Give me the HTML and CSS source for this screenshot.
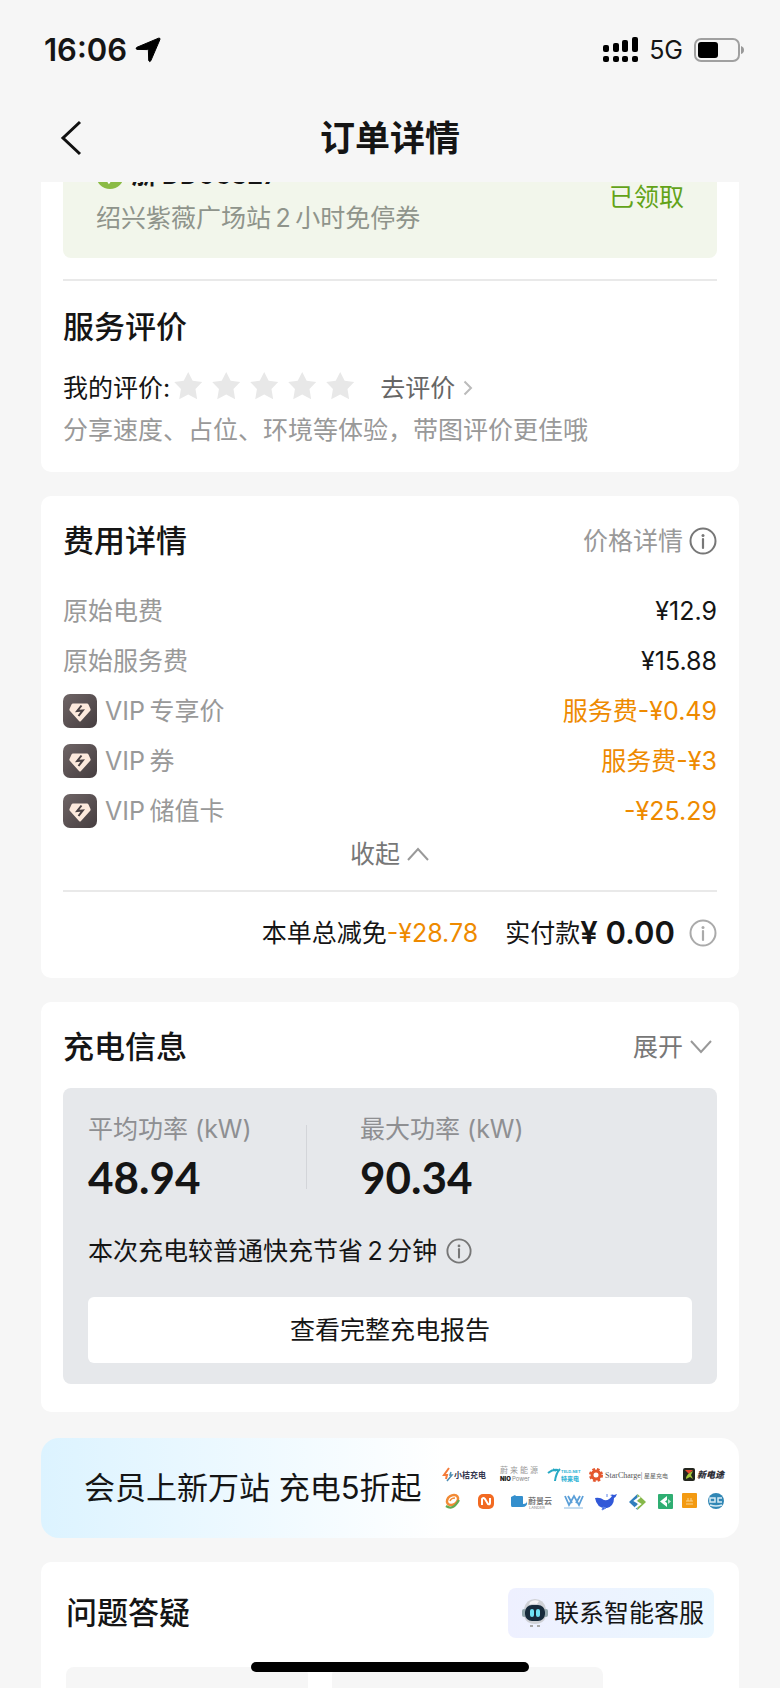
FILE: index.html
```
<!DOCTYPE html>
<html lang="zh-CN">

<head>
    <meta charset="UTF-8">
    <meta name="viewport" content="width=device-width, initial-scale=1.0">
    <title>订单详情</title>
    <link rel="stylesheet" href="styles.css">
</head>

<body>
    <svg width="0" height="0" class="defs" aria-hidden="true">
        <linearGradient id="vipBg" x1="0" y1="0" x2="1" y2="1">
            <stop offset="0" stop-color="#6f6566" />
            <stop offset="1" stop-color="#453d3f" />
        </linearGradient>
        <symbol id="info" viewBox="0 0 28 28">
            <circle cx="14" cy="14" r="12.5" fill="none" stroke="currentColor" stroke-width="2" />
            <circle cx="14" cy="8.5" r="1.5" fill="currentColor" />
            <path d="M14 12v9" stroke="currentColor" stroke-width="2.2" stroke-linecap="round" />
        </symbol>
        <symbol id="vip" viewBox="0 0 34 34">
            <rect width="34" height="34" rx="7" fill="url(#vipBg)" />
            <path d="M10 9.500h14q1 0 1.500 1l2 4.500q.4 1-.3 1.800L18 27q-1 1-2 0l-9.200-10.200q-.7-.8-.3-1.800l2-4.500q.5-1 1.500-1z" fill="#fdeadd" />
            <path d="M18.500 11.500l-4.300 5.500 5.600-.6-4.300 5.600" fill="none" stroke="#4a4143" stroke-width="2" />
        </symbol>
    </svg>

    <div class="app">
        <header class="header">
            <div class="status">
                <span class="time">16:06</span>
                <svg class="location" width="26" height="26" viewBox="0 0 26 26">
                    <path d="M23.500 1.200Q25.500.6 24.900 2.600L15.800 23.800Q14.600 25.600 13.700 23.500L13.400 13.400Q13.300 12.700 12.600 12.600L2 12.400Q0 11.500 1.900 10.300z" fill="#000" stroke="#000" />
                </svg>
                <svg class="signal" width="36" height="26" viewBox="0 0 36 26">
                    <rect x="0" y="8" width="6" height="7" rx="2" />
                    <rect x="10" y="6" width="6" height="9" rx="2" />
                    <rect x="19" y="3" width="6" height="12" rx="2" />
                    <rect x="29" y="0" width="6" height="15" rx="2" />
                    <rect x="0" y="19" width="6" height="6" rx="2" />
                    <rect x="10" y="19" width="6" height="6" rx="2" />
                    <rect x="19" y="19" width="6" height="6" rx="2" />
                    <rect x="29" y="19" width="6" height="6" rx="2" />
                </svg>
                <span class="network">5G</span>
                <svg width="50" height="24" viewBox="0 0 50 24">
                    <rect x="1" y="1" width="44" height="22" rx="6" fill="none" stroke="#a0a0a0" stroke-width="2" />
                    <rect x="4" y="4" width="20" height="16" rx="3" fill="#000" />
                    <path d="M47 8q3 1 3 4t-3 4z" fill="#999" />
                </svg>
            </div>
            <div class="navbar">
                <button type="button" class="back" aria-label="返回">
                    <svg width="22" height="36" viewBox="0 0 22 36">
                        <path d="M20 2L3 18l17 16" fill="none" stroke="#111" stroke-width="3" />
                    </svg>
                </button>
                <h1>订单详情</h1>
            </div>
        </header>

        <main class="content">
            <section class="card card-service">
                <div class="coupon">
                    <div class="coupon-info">
                        <div class="plate">
                            <svg width="28" height="28" viewBox="0 0 26 26">
                                <circle cx="13" cy="13" r="13" fill="#8bbb45" />
                                <path d="M7 12l5 7 8-11" fill="none" stroke="#fff" stroke-width="3" />
                            </svg>
                            <span>浙 DD06327</span>
                        </div>
                        <p>绍兴紫薇广场站&thinsp;2&thinsp;小时免停券</p>
                    </div>
                    <span class="coupon-state">已领取</span>
                </div>
                <hr>
                <h2>服务评价</h2>
                <div class="rating">
                    <span id="ratingLabel">我的评价:</span>
                    <div class="stars" role="radiogroup" aria-labelledby="ratingLabel">
                        <input type="radio" name="star" value="1" aria-label="1星">
                        <input type="radio" name="star" value="2" aria-label="2星">
                        <input type="radio" name="star" value="3" aria-label="3星">
                        <input type="radio" name="star" value="4" aria-label="4星">
                        <input type="radio" name="star" value="5" aria-label="5星">
                    </div>
                    <a href="#" class="rate-link">去评价
                        <svg width="10" height="16" viewBox="0 0 10 16">
                            <path d="M1.500 1.500L8 8l-6.500 6.500" fill="none" stroke="#bbb" stroke-width="2" />
                        </svg>
                    </a>
                </div>
                <p class="hint">分享速度、占位、环境等体验，带图评价更佳哦</p>
            </section>

            <section class="card card-fee">
                <div class="card-head">
                    <h2>费用详情</h2>
                    <button type="button" class="text-btn light">价格详情
                        <svg class="dark-icon" width="28" height="28"><use href="#info" /></svg>
                    </button>
                </div>
                <dl class="fees">
                    <div class="fee">
                        <dt>原始电费</dt>
                        <dd>¥12.9</dd>
                    </div>
                    <div class="fee">
                        <dt>原始服务费</dt>
                        <dd>¥15.88</dd>
                    </div>
                    <div class="fee">
                        <dt><svg width="34" height="34"><use href="#vip" /></svg>VIP&thinsp;专享价</dt>
                        <dd class="discount">服务费-¥0.49</dd>
                    </div>
                    <div class="fee">
                        <dt><svg width="34" height="34"><use href="#vip" /></svg>VIP&thinsp;券</dt>
                        <dd class="discount">服务费-¥3</dd>
                    </div>
                    <div class="fee">
                        <dt><svg width="34" height="34"><use href="#vip" /></svg>VIP&thinsp;储值卡</dt>
                        <dd class="discount">-¥25.29</dd>
                    </div>
                </dl>
                <button type="button" class="text-btn collapse">收起
                    <svg width="24" height="16" viewBox="0 0 24 16">
                        <path d="M2 14L12 3l10 11" fill="none" stroke="#999" stroke-width="2" />
                    </svg>
                </button>
                <hr>
                <div class="total">
                    <span>本单总减免<span class="discount">-¥28.78</span></span>
                    <span class="paid">实付款<strong>¥ 0.00</strong></span>
                    <button type="button" class="text-btn muted" aria-label="实付款说明">
                        <svg width="28" height="28"><use href="#info" /></svg>
                    </button>
                </div>
            </section>

            <section class="card card-charge">
                <div class="card-head">
                    <h2>充电信息</h2>
                    <button type="button" class="text-btn">展开
                        <svg width="24" height="16" viewBox="0 0 24 16">
                            <path d="M2 2l10 11L22 2" fill="none" stroke="#999" stroke-width="2" />
                        </svg>
                    </button>
                </div>
                <div class="report">
                    <div class="powers">
                        <div class="power">
                            <span>平均功率 (kW)</span>
                            <strong>48.94</strong>
                        </div>
                        <div class="power">
                            <span>最大功率 (kW)</span>
                            <strong>90.34</strong>
                        </div>
                    </div>
                    <p class="saving">本次充电较普通快充节省&thinsp;2&thinsp;分钟
                        <svg class="dark-icon" width="26" height="26"><use href="#info" /></svg>
                    </p>
                    <button type="button" class="report-btn">查看完整充电报告</button>
                </div>
            </section>

            <a href="#" class="banner">
                <span>会员上新万站 充电5折起</span>
                <svg class="partners" width="290" height="56" viewBox="0 0 290 56">
                    <!-- 第一行 -->
                    <path d="M9 8l-5 7h3l-1 4" fill="none" stroke="#f47b3a" stroke-width="2" />
                    <path d="M11 12l-1 3h2l-5 6" fill="none" stroke="#4b8db5" stroke-width="1.500" />
                    <text x="14" y="18" font-size="8" font-weight="700" fill="#35374f">小桔充电</text>
                    <text x="60 70 80 90" y="13" font-size="8" fill="#999">蔚来能源</text>
                    <text x="60" y="21" font-size="6" font-weight="900" fill="#222">NIO</text>
                    <text x="72" y="21" font-size="6" fill="#888">Power</text>
                    <path d="M108 13q5-4 10-3M115 21q1-8 5-12M113 9l3 2" fill="none" stroke="#27a9c4" stroke-width="2" />
                    <text x="121" y="13" font-size="4" font-weight="700" fill="#35b5d6">TELD.NET</text>
                    <text x="121" y="21" font-size="6" font-weight="900" fill="#35b5d6">特来电</text>
                    <circle cx="156" cy="15" r="4" fill="none" stroke="#e4572e" stroke-width="3" />
                    <circle cx="156" cy="15" r="5.800" fill="none" stroke="#e4572e" stroke-width="2.500" stroke-dasharray="2.600 2" />
                    <text class="serif" x="165" y="18" font-size="8" fill="#555">StarCharge|</text>
                    <text x="204" y="18" font-size="6" fill="#666">星星充电</text>
                    <rect x="243" y="8" width="12" height="13" rx="2" fill="#24261f" />
                    <path d="M245 10l4 4 4-4z" fill="#e4492d" />
                    <path d="M246 19q0-5 7-8l-2 4 2 4-3-2z" fill="#a6c83a" />
                    <text x="257" y="18" font-size="9" font-weight="900" font-style="italic" fill="#2d2d35">新电途</text>
                    <!-- 第二行 -->
                    <ellipse cx="12.500" cy="40" rx="6" ry="4.500" transform="rotate(-35 12.500 40)" fill="none" stroke="#f28a35" stroke-width="2.500" />
                    <path d="M10 41q1-3 5-3" fill="none" stroke="#f28a35" stroke-width="1.500" />
                    <path d="M6 46q7 5 13-6" fill="none" stroke="#64aa52" stroke-width="2.200" />
                    <rect x="38" y="34" width="16" height="15" rx="5" fill="#f26a22" />
                    <path d="M42 45v-6q1-2 3 0l3 5q2 1 2-1v-5" fill="none" stroke="#fff" stroke-width="2" />
                    <path d="M71 37l4-2 1 1h6q1 0 1 1v7q4 0 4-3 1 6-5 6H72q-1 0-1-2z" fill="#348fcd" />
                    <text x="88" y="44" font-size="8" font-weight="700" fill="#777">蔚景云</text>
                    <text x="89" y="49" font-size="4" fill="#888">LANDER</text>
                    <path d="M125 36l4 9 5-9 5 9 4-9M128 36l4 7M140 36l-4 7" fill="none" stroke="#5b9fd8" stroke-width="1.800" />
                    <path d="M124 48h19" stroke="#8dbbe0" stroke-width="1" />
                    <path d="M155 38q5-1 9 2 5 1 8-4l-2-1q3-1 4 0l3-1q-1 3-3 4 0 8-7 10-10 1-12-10z" fill="#3158d8" />
                    <path d="M163 47l-1 3 4-2zM167 34v3" fill="#3158d8" stroke="#5f86ea" />
                    <path d="M197.500 34l-8.500 8 8.500 8z" fill="#2f7ebd" />
                    <path d="M197.500 34l8.500 8-8.500 8z" fill="#86b84a" />
                    <path d="M200 37l-5 4 5 3-5 4" fill="none" stroke="#fff" stroke-width="2" />
                    <rect x="218" y="34" width="15" height="15" rx="1" fill="#2fae72" />
                    <path d="M227 36l-7 5.500 7 5.500v-4l-2-1.500 2-1.500z" fill="#fff" />
                    <path d="M228 39l3 2.500-3 2.500z" fill="#bfe8d4" />
                    <rect x="242" y="33" width="15" height="15" rx="1" fill="#f39a12" />
                    <path d="M246 41h7M246 44h7M248 38v3M251 38v3" stroke="#fbd48f" stroke-width="1" />
                    <circle cx="276" cy="41" r="8" fill="#3187b5" />
                    <path d="M270 38h5v4h-5zM282 38h-4v4h4M270 45q6 2 12 0" fill="none" stroke="#d7ecf5" stroke-width="1.500" />
                </svg>
            </a>

            <section class="card card-faq">
                <div class="card-head">
                    <h2>问题答疑</h2>
                    <button type="button" class="service-btn">
                        <svg width="26" height="30" viewBox="0 0 26 30">
                            <path d="M2 18V11q2-10 11-10t11 10v7q-2 8-11 8T2 18z" fill="#cfd1d6" />
                            <path d="M8 4q4-3 9-1l-2 3q-4-1-8 1z" fill="#f5f5f7" />
                            <rect x="0" y="11" width="4" height="8" rx="2" fill="#92a7ad" />
                            <rect x="22" y="11" width="4" height="8" rx="2" fill="#92a7ad" />
                            <rect x="3" y="7" width="20" height="16" rx="7" fill="#172b3c" />
                            <rect x="8" y="11" width="4" height="8" rx="2" fill="#6fe2f5" />
                            <rect x="14" y="11" width="4" height="8" rx="2" fill="#6fe2f5" />
                            <path d="M8 28h3M15 28h3" stroke="#aaa" stroke-width="2" />
                        </svg>
                        联系智能客服
                    </button>
                </div>
                <div class="questions">
                    <div class="question short"></div>
                    <div class="question"></div>
                </div>
            </section>
        </main>

        <div class="home-bar"></div>
    </div>
</body>

</html>
```
FILE: styles.css
```
body {
    margin: 0;
    background-color: #f6f6f6;
    color: #151515;
    font-family: Inter, "Noto Sans CJK SC", sans-serif;
    font-size: 25px;
    line-height: 36px;
}

h1,
h2,
p,
dl,
dd {
    margin: 0;
}

h1 {
    font-size: 35px;
    line-height: 48px;
    font-weight: 700;
}

h2 {
    font-size: 31px;
    line-height: 44px;
    font-weight: 500;
}

svg {
    display: block;
    flex-shrink: 0;
}

button {
    border: none;
    padding: 0;
    background: none;
    color: inherit;
    font: inherit;
    cursor: pointer;
}

a {
    color: inherit;
    text-decoration: none;
}

hr {
    height: 2px;
    margin: 0;
    border: none;
    background-color: #e9e9e9;
}

.defs {
    position: absolute;
}

.app {
    height: 100vh;
    overflow: hidden;
}

/* Cabecera fija, el contenido pasa por debajo */
.header {
    position: sticky;
    top: 0;
    z-index: 1;
    height: 182px;
    background-color: #f6f6f6;
}

.status {
    display: flex;
    align-items: center;
    padding: 32px 36px 0 44px;
}

.time {
    font-size: 31px;
    font-weight: 600;
}

.location {
    margin-left: 8px;
}

.signal {
    margin-left: auto;
}

.network {
    margin: 0 11px 0 10px;
}

.navbar {
    display: grid;
    grid-template-columns: 1fr auto 1fr;
    align-items: center;
    padding: 46px 60px 0;
}

.content {
    display: flex;
    flex-direction: column;
    gap: 24px;
    margin-top: -24px;
    padding: 0 41px;
}

.card {
    padding: 0 22px;
    border-radius: 10px;
    background-color: #fff;
}

.card-head {
    display: flex;
    justify-content: space-between;
    align-items: center;
}

/* Cupon y valoracion */
.card-service {
    padding-bottom: 24px;
}

.coupon {
    display: flex;
    justify-content: space-between;
    align-items: center;
    margin-bottom: 21px;
    padding: 0 33px 22px;
    border-radius: 8px;
    background-color: #f2f6eb;
    color: #8f948b;
}

.plate {
    display: flex;
    align-items: center;
    gap: 7px;
    height: 34px;
    margin-bottom: 8px;
    color: #151515;
    font-weight: 700;
}

.coupon-state {
    color: #62a318;
}

.card-service h2 {
    margin-top: 24px;
}

.rating {
    display: flex;
    align-items: center;
    margin-top: 21px;
}

.stars {
    display: flex;
    gap: 10px;
    margin-left: 4px;
}

.stars input {
    appearance: none;
    width: 28px;
    height: 28px;
    margin: 0 0 4px;
    background-color: #e8e8e8;
    clip-path: polygon(50% 0, 66% 31%, 100% 36%, 76% 61%, 82% 97%, 50% 80%, 18% 97%, 24% 61%, 0 36%, 34% 31%);
}

.stars input:checked {
    background-color: #f7a400;
}

.rate-link {
    display: flex;
    align-items: center;
    gap: 8px;
    margin-left: 26px;
    color: #666;
}

.hint {
    margin-top: 6px;
    color: #999;
}

/* Detalle de costos */
.card-fee {
    padding-top: 23px;
    padding-bottom: 27px;
}

.text-btn {
    display: flex;
    align-items: center;
    gap: 6px;
    color: #777;
}

.text-btn.light {
    color: #999;
}

.text-btn.muted {
    color: #aaa;
}

.dark-icon {
    color: #777;
}

.fees {
    margin-top: 23px;
}

.fee {
    display: flex;
    justify-content: space-between;
    align-items: center;
    height: 50px;
}

.fee dt {
    display: flex;
    align-items: center;
    gap: 8px;
    color: #999;
}

.discount {
    color: #ee8a00;
}

.collapse {
    margin: 0 auto 18px;
}

.total {
    display: flex;
    justify-content: flex-end;
    align-items: center;
    margin-top: 23px;
}

.paid {
    display: flex;
    align-items: center;
    margin: 0 14px 0 27px;
}

.paid strong {
    font-size: 31px;
    font-weight: 600;
}

/* Informacion de carga */
.card-charge {
    padding-top: 23px;
    padding-bottom: 28px;
}

.card-charge .card-head {
    padding-right: 4px;
}

.report {
    margin-top: 19px;
    padding: 23px 25px 21px;
    border-radius: 8px;
    background-color: #e6e8eb;
}

.powers {
    display: flex;
}

.power {
    display: flex;
    flex-direction: column;
    color: #8e8f92;
}

.power:first-child {
    position: relative;
    width: 272px;
}

.power:first-child::after {
    content: "";
    position: absolute;
    top: 14px;
    right: 53px;
    width: 1px;
    height: 64px;
    background-color: #d3d5d9;
}

.power strong {
    margin-top: 6px;
    color: #151515;
    font-family: Lato, sans-serif;
    font-size: 44px;
    line-height: 48px;
    font-weight: 700;
}

.saving {
    display: flex;
    align-items: center;
    gap: 9px;
    margin-top: 32px;
}

.report-btn {
    width: 100%;
    height: 66px;
    margin-top: 28px;
    border-radius: 6px;
    background-color: #fff;
}

.banner {
    display: flex;
    justify-content: space-between;
    align-items: center;
    height: 100px;
    margin-top: 2px;
    padding: 0 9px 0 43px;
    border-radius: 18px;
    background: linear-gradient(90deg, #dcf3ff, #fff 58%);
    font-size: 31px;
}

.banner span {
    white-space: nowrap;
}

.partners {
    font-family: Inter, "Noto Sans CJK SC", sans-serif;
}

.serif {
    font-family: "Liberation Serif", serif;
}

/* Preguntas */
.card-faq {
    padding: 26px 25px 0;
}

.service-btn {
    display: flex;
    align-items: center;
    gap: 6px;
    height: 50px;
    padding: 0 10px 0 14px;
    border-radius: 8px;
    background: linear-gradient(90deg, #eef0ff, #eaf7ff);
}

.questions {
    display: flex;
    gap: 24px;
    margin-top: 29px;
}

.question {
    width: 271px;
    height: 72px;
    border-radius: 8px;
    background-color: #f6f6f6;
}

.question.short {
    width: 242px;
}

.home-bar {
    position: fixed;
    bottom: 16px;
    left: 50%;
    z-index: 2;
    width: 278px;
    height: 10px;
    margin-left: -139px;
    border-radius: 5px;
    background-color: #000;
}
```
